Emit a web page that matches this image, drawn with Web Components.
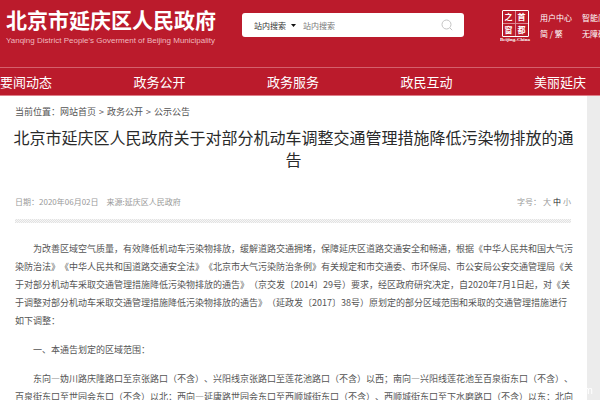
<!DOCTYPE html>
<html lang="zh-CN">
<head>
<meta charset="utf-8">
<title>北京市延庆区人民政府</title>
<style>
    html {
        background: #ececec;
    }
    body {
        margin: 0;
        height: 100vh;
        overflow: hidden;
        font-family: "Noto Sans CJK SC", "Noto Sans", sans-serif;
        text-spacing-trim: space-all;
    }
</style>
</head>
<body>
<site-header></site-header>
<site-nav>
    <a href="#news">要闻动态</a>
    <a href="#open">政务公开</a>
    <a href="#service">政务服务</a>
    <a href="#interact">政民互动</a>
    <a href="#beauty">美丽延庆</a>
</site-nav>
<notice-article>
    <bread-crumb slot="path">
        <a href="#home">网站首页</a>
        <a href="#open">政务公开</a>
        <a href="#notice">公示公告</a>
    </bread-crumb>
    <span slot="title">北京市延庆区人民政府关于对部分机动车调整交通管理措施降低污染物排放的通<br>告</span>
    <notice-meta slot="meta" date="2020年06月02日" source="延庆区人民政府"></notice-meta>
    <notice-paragraph>为改善区域空气质量，有效降低机动车污染物排放，缓解道路交通拥堵，保障延庆区道路交通安全和畅通，根据《中华人民共和国大气污<br>染防治法》《中华人民共和国道路交通安全法》《北京市大气污染防治条例》有关规定和市交通委、市环保局、市公安局公安交通管理局《关<br>于对部分机动车采取交通管理措施降低污染物排放的通告》（京交发〔2014〕29号）要求，经区政府研究决定，自2020年7月1日起，对《关<br>于调整对部分机动车采取交通管理措施降低污染物排放的通告》（延政发〔2017〕38号）原划定的部分区域范围和采取的交通管理措施进行<br>如下调整：</notice-paragraph>
    <notice-paragraph>一、本通告划定的区域范围：</notice-paragraph>
    <notice-paragraph>东向—妫川路庆隆路口至京张路口（不含）、兴阳线京张路口至莲花池路口（不含）以西；南向—兴阳线莲花池至百泉街东口（不含）、<br>百泉街东口至世园会东口（不含）以北；西向—延康路世园会东口至西顺城街东口（不含）、西顺城街东口至下水磨路口（不含）以东；北向</notice-paragraph>
</notice-article>
<page-mark>m</page-mark>

<script>
/**
 * Attaches an open shadow root with the given markup.
 *
 * @param {HTMLElement} element The host element.
 * @param {string} html The markup of the shadow root.
 */
function attach(element, html) {
    element.attachShadow({ mode: 'open' }).innerHTML = html;
}

/**
 * Site header: name, search, seal and user links.
 *
 * @element site-header
 */
class SiteHeader extends HTMLElement {
    constructor() {
        super();
        attach(this, /*html*/`
            <style>
                :host {
                    display: flex;
                    height: 67px;
                    padding-left: 6px;
                    overflow: hidden;
                    background: #bb1b2c;
                    color: #fff;
                    white-space: nowrap;
                }
                .brand {
                    flex: 0 0 214px;
                    padding-top: 5px;
                }
                h1 {
                    margin: 0;
                    font-size: 21px;
                    line-height: 28px;
                    font-weight: 700;
                }
                .brand p {
                    margin: 0;
                    font: 8px/16px "Liberation Sans", sans-serif;
                    color: #f0b9bf;
                }
                search-box {
                    flex: 1;
                    margin: 13px 36px 0 22px;
                }
                .side {
                    display: flex;
                    flex: 0 0 100px;
                    gap: 10px;
                    padding-top: 10px;
                    overflow: hidden;
                }
                .links {
                    display: grid;
                    grid-template-columns: 32px auto;
                    gap: 0 10px;
                    align-content: start;
                    font-size: 8px;
                    line-height: 16px;
                }
                a {
                    color: inherit;
                    text-decoration: none;
                }
            </style>
            <div class="brand">
                <h1>北京市延庆区人民政府</h1>
                <p>Yanqing District People's Goverment of Beijing Municipality</p>
            </div>
            <search-box></search-box>
            <div class="side">
                <capital-seal></capital-seal>
                <div class="links">
                    <a href="#user">用户中心</a><a href="#bot">智能问答</a>
                    <span><a href="#hans">简</a> / <a href="#hant">繁</a></span><a href="#access">无障碍</a>
                </div>
            </div>
        `);
    }
}

/**
 * Search field with a scope drop-down.
 *
 * @element search-box
 */
class SearchBox extends HTMLElement {
    constructor() {
        super();
        attach(this, /*html*/`
            <style>
                :host {
                    display: block;
                }
                form {
                    display: flex;
                    align-items: center;
                    height: 24px;
                    padding: 0 11px 0 12px;
                    border-radius: 3px;
                    background: #fff;
                }
                select, input, button {
                    margin: 0;
                    padding: 0;
                    border: 0;
                    background: none;
                    font: inherit;
                    font-size: 8px;
                    outline: 0;
                }
                select {
                    appearance: none;
                    width: 37px;
                    color: #333;
                }
                .arrow {
                    width: 5px;
                    height: 3px;
                    margin-right: 7px;
                    fill: #111;
                }
                input {
                    flex: 1;
                    min-width: 0;
                }
                input::placeholder {
                    color: #777;
                }
                button {
                    display: flex;
                }
                button svg {
                    width: 12px;
                    height: 12px;
                    fill: none;
                    stroke: #c4c4c4;
                }
            </style>
            <form>
                <select aria-label="搜索范围"><option>站内搜索</option></select>
                <svg class="arrow" viewBox="0 0 5 3"><path d="M0 0h5L2.5 3z"/></svg>
                <input type="text" placeholder="站内搜索" aria-label="站内搜索">
                <button type="button" aria-label="搜索">
                    <svg viewBox="0 0 12 12"><circle cx="5.5" cy="5.5" r="4.5"/><path d="M9 9l2.2 2.2"/></svg>
                </button>
            </form>
        `);
    }
}

/**
 * Seal of the capital portal.
 *
 * @element capital-seal
 */
class CapitalSeal extends HTMLElement {
    constructor() {
        super();
        attach(this, /*html*/`
            <style>
                :host {
                    display: flex;
                    flex-direction: column;
                    align-items: center;
                    width: 32px;
                }
                .seal {
                    display: grid;
                    grid-template-columns: 12px 12px;
                    grid-template-rows: 12px 12px;
                    gap: 1px;
                    border: 1px solid #fff;
                    border-radius: 1px;
                    background: #dc8791;
                    font-size: 8px;
                    line-height: 12px;
                    font-weight: 700;
                    text-align: center;
                }
                .seal span {
                    background: #bb1b2c;
                }
                small {
                    font: bold 5px/6px "Liberation Serif", serif;
                }
            </style>
            <div class="seal"><span>之</span><span>首</span><span>窗</span><span>都</span></div>
            <small>Beijing-China</small>
        `);
    }
}

/**
 * Main navigation bar.
 *
 * @element site-nav
 */
class SiteNav extends HTMLElement {
    constructor() {
        super();
        attach(this, /*html*/`
            <style>
                :host {
                    display: block;
                    border-top: 1px solid #d4606c;
                    border-bottom: 1px solid #de7f89;
                    background: #bb1b2c;
                }
                nav {
                    display: flex;
                    justify-content: space-between;
                    padding-right: 14px;
                    font-size: 13px;
                    line-height: 27px;
                }
                ::slotted(a) {
                    color: #fff;
                    text-decoration: none;
                }
            </style>
            <nav><slot></slot></nav>
        `);
    }
}

/**
 * White sheet that holds a notice.
 *
 * @element notice-article
 */
class NoticeArticle extends HTMLElement {
    constructor() {
        super();
        attach(this, /*html*/`
            <style>
                :host {
                    display: block;
                    margin-right: 13px;
                    background: #fff;
                    color: #555;
                }
                h2 {
                    margin: 0;
                    padding-top: 5px;
                    font-size: 16px;
                    line-height: 22px;
                    font-weight: 400;
                    text-align: center;
                    white-space: nowrap;
                    color: #2a2a2a;
                }
                .rule {
                    height: 4px;
                    margin: 11px 16px 17px 15px;
                    background: repeating-conic-gradient(#e2e2e2 0 25%, #f6f6f6 0 50%) 0 0 / 2px 2px;
                }
                .text {
                    display: flex;
                    flex-direction: column;
                    gap: 11px;
                    padding-left: 15px;
                }
            </style>
            <article>
                <slot name="path"></slot>
                <h2><slot name="title"></slot></h2>
                <slot name="meta"></slot>
                <div class="rule"></div>
                <div class="text"><slot></slot></div>
            </article>
        `);
    }
}

/**
 * Path to the current page.
 *
 * @element bread-crumb
 */
class BreadCrumb extends HTMLElement {
    constructor() {
        super();
        attach(this, /*html*/`
            <style>
                :host {
                    display: block;
                    padding: 7px 15px 0;
                    font-size: 9px;
                    line-height: 18px;
                }
                nav {
                    display: flex;
                }
                ::slotted(a) {
                    color: inherit;
                    text-decoration: none;
                }
                ::slotted(a:not(:first-child))::before {
                    content: ">";
                    margin: 0 3px;
                }
            </style>
            <nav>当前位置：<slot></slot></nav>
        `);
    }
}

/**
 * Date, source and text size switch.
 *
 * @element notice-meta
 */
class NoticeMeta extends HTMLElement {
    connectedCallback() {
        attach(this, /*html*/`
            <style>
                :host {
                    display: flex;
                    padding: 26px 16px 0 15px;
                    font-size: 8px;
                    line-height: 12px;
                    color: #999;
                }
                .source {
                    flex: 1;
                    margin-left: 8px;
                }
                .sizes {
                    display: flex;
                    gap: 2px;
                }
                button {
                    padding: 0;
                    border: 0;
                    background: none;
                    font: inherit;
                    color: inherit;
                }
                button[aria-pressed="true"] {
                    color: #222;
                }
            </style>
            <span>日期：${this.getAttribute('date')}</span>
            <span class="source">来源:${this.getAttribute('source')}</span>
            <div class="sizes">
                <span>字号：</span>
                <button type="button">大</button>
                <button type="button" aria-pressed="true">中</button>
                <button type="button">小</button>
            </div>
        `);
    }
}

/**
 * One indented paragraph of a notice.
 *
 * @element notice-paragraph
 */
class NoticeParagraph extends HTMLElement {
    constructor() {
        super();
        attach(this, /*html*/`
            <style>
                :host {
                    display: block;
                }
                p {
                    margin: 0;
                    font-size: 9px;
                    line-height: 18px;
                    text-indent: 2em;
                    white-space: nowrap;
                }
            </style>
            <p><slot></slot></p>
        `);
    }
}

/**
 * Faint mark in the lower right corner of the window.
 *
 * @element page-mark
 */
class PageMark extends HTMLElement {
    constructor() {
        super();
        attach(this, /*html*/`
            <style>
                :host {
                    position: fixed;
                    right: 7px;
                    bottom: 3px;
                    font: 11px/14px "Liberation Sans", sans-serif;
                    color: #fff;
                }
            </style>
            <slot></slot>
        `);
    }
}

customElements.define('site-header', SiteHeader);
customElements.define('search-box', SearchBox);
customElements.define('capital-seal', CapitalSeal);
customElements.define('site-nav', SiteNav);
customElements.define('notice-article', NoticeArticle);
customElements.define('bread-crumb', BreadCrumb);
customElements.define('notice-meta', NoticeMeta);
customElements.define('notice-paragraph', NoticeParagraph);
customElements.define('page-mark', PageMark);
</script>
</body>
</html>
